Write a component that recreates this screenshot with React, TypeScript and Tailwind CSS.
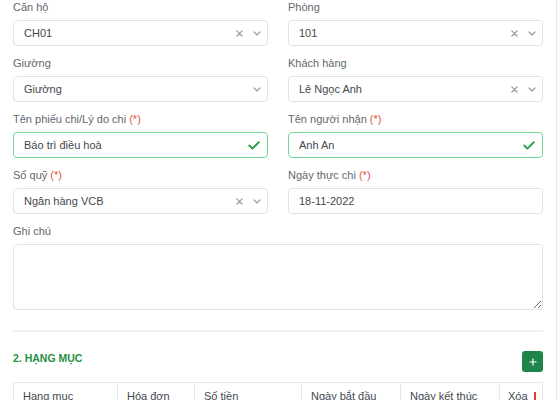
import React from "react";

const font = { fontFamily: '"Liberation Sans", Arial, sans-serif' };

function XIcon() {
  return (
    <svg width="7" height="7" viewBox="0 0 7 7" className="shrink-0">
      <path d="M0.8 0.8 L6.2 6.2 M6.2 0.8 L0.8 6.2" stroke="#8f949b" strokeWidth="1.2" strokeLinecap="round" />
    </svg>
  );
}
function Chevron() {
  return (
    <svg width="8" height="5" viewBox="0 0 8 5" className="shrink-0">
      <path d="M0.8 0.8 L4 4 L7.2 0.8" stroke="#8f949b" strokeWidth="1.1" fill="none" strokeLinecap="round" strokeLinejoin="round" />
    </svg>
  );
}
function Check() {
  return (
    <svg width="12" height="9" viewBox="0 0 12 9" className="shrink-0">
      <path d="M1.2 4.6 L4.4 7.6 L10.8 1.2" stroke="#2ea44f" strokeWidth="2" fill="none" strokeLinecap="round" strokeLinejoin="round" />
    </svg>
  );
}

function Label({ text, req }: { text: string; req?: boolean }) {
  return (
    <div className="h-[14px] leading-[14px] text-[11px] text-[#62676e] mb-[6px] whitespace-nowrap">
      {text}
      {req && <span className="text-[#e5533c]"> (*)</span>}
    </div>
  );
}

function SelectBox({ value, clear = true }: { value: string; clear?: boolean }) {
  return (
    <div className="h-[26px] border border-[#dfe2e6] rounded-[4px] flex items-center pl-[10px] pr-[6px] text-[11px] text-[#43484e] bg-white">
      <span className="flex-1">{value}</span>
      <div className="flex items-center gap-[10px]">
        {clear && <XIcon />}
        <Chevron />
      </div>
    </div>
  );
}

function ValidInput({ value }: { value: string }) {
  return (
    <div className="h-[26px] border border-[#74d695] rounded-[4px] flex items-center pl-[10px] pr-[7px] text-[11px] text-[#43484e] bg-white">
      <span className="flex-1">{value}</span>
      <Check />
    </div>
  );
}

function TextInput({ value }: { value: string }) {
  return (
    <div className="h-[26px] border border-[#dfe2e6] rounded-[4px] flex items-center pl-[10px] pr-[8px] text-[11px] text-[#43484e] bg-white">
      {value}
    </div>
  );
}

export default function App() {
  return (
    <div className="w-[560px] h-[400px] overflow-hidden bg-white" style={font}>
      <div className="w-[557px] h-[400px] border-r border-[#e6e8eb] pl-[13px] pr-[13px] pt-0">
        <div className="w-[530px] grid grid-cols-2 gap-x-[20px] gap-y-[10px]">
          <div>
            <Label text="Căn hộ" />
            <SelectBox value="CH01" />
          </div>
          <div>
            <Label text="Phòng" />
            <SelectBox value="101" />
          </div>
          <div>
            <Label text="Giường" />
            <SelectBox value="Giường" clear={false} />
          </div>
          <div>
            <Label text="Khách hàng" />
            <SelectBox value="Lê Ngọc Anh" />
          </div>
          <div>
            <Label text="Tên phiếu chi/Lý do chi" req />
            <ValidInput value="Báo trì điều hoà" />
          </div>
          <div>
            <Label text="Tên người nhận" req />
            <ValidInput value="Anh An" />
          </div>
          <div>
            <Label text="Số quỹ" req />
            <SelectBox value="Ngân hàng VCB" />
          </div>
          <div>
            <Label text="Ngày thực chi" req />
            <TextInput value="18-11-2022" />
          </div>
          <div className="col-span-2">
            <Label text="Ghi chú" />
            <textarea
              className="block w-full h-[66px] border border-[#dfe2e6] rounded-[4px] outline-none"
              style={font}
            />
          </div>
        </div>
        <div className="w-[530px] mt-[20px] h-[2px] bg-[#f0f1f3]" />
        <div className="w-[530px] mt-[19px] flex justify-between items-start">
          <div className="text-[10.5px] font-bold text-[#1f8f44] leading-[14px]">2. HẠNG MỤC</div>
          <div className="w-[21px] h-[21px] rounded-[3px] bg-[#1e8449] flex items-center justify-center">
            <svg width="8" height="8" viewBox="0 0 8 8">
              <path d="M4 0.5 V7.5 M0.5 4 H7.5" stroke="#ffffff" strokeWidth="1.2" />
            </svg>
          </div>
        </div>
        <div className="w-[530px] mt-[10px] border border-[#e6e8eb] flex text-[11px] text-[#43484e] h-[40px] leading-[14px]">
          <div className="w-[104px] border-r border-[#e6e8eb] pl-[9px] pt-[6px]">Hạng mục</div>
          <div className="w-[77px] border-r border-[#e6e8eb] pl-[9px] pt-[6px]">Hóa đơn</div>
          <div className="w-[107px] border-r border-[#e6e8eb] pl-[9px] pt-[6px]">Số tiền</div>
          <div className="w-[99px] border-r border-[#e6e8eb] pl-[9px] pt-[6px]">Ngày bắt đầu</div>
          <div className="w-[99px] border-r border-[#e6e8eb] pl-[9px] pt-[6px]">Ngày kết thúc</div>
          <div className="flex-1 pl-[8px] pt-[6px] flex items-start gap-[6px]">
            <span>Xóa</span>
            <span className="mt-[3px] w-[2px] h-[10px] bg-[#e53935]" />
          </div>
        </div>
      </div>
    </div>
  );
}
